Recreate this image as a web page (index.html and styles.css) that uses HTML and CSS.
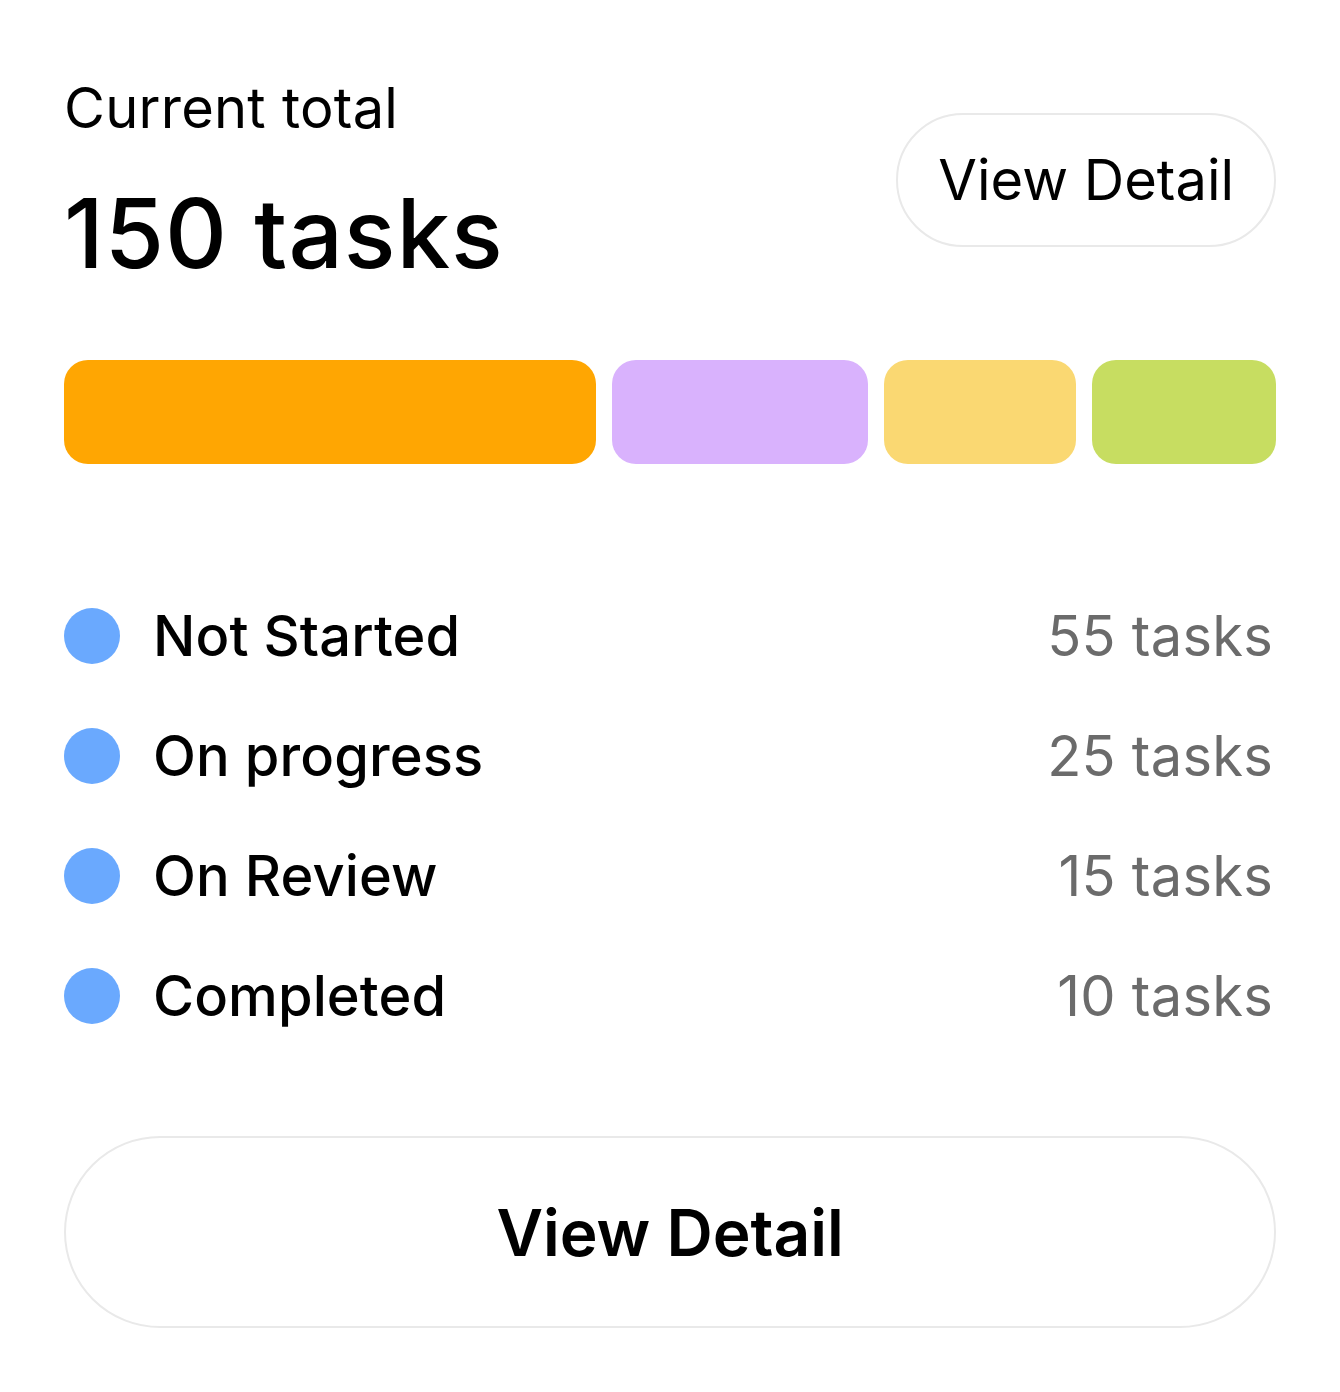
FILE: index.html
```html
<!DOCTYPE html>
<html lang="en">
<head>
    <meta charset="UTF-8">
    <meta name="viewport" content="width=device-width, initial-scale=1.0">
    <title>Task summary</title>
    <link rel="stylesheet" href="styles.css">
</head>
<body>

<div class="card">
    <div class="card-head">
        <div class="total">
            <p class="total-label">Current total</p>
            <p class="total-value">150 tasks</p>
        </div>
        <button class="btn-small" type="button">View Detail</button>
    </div>

    <div class="bar">
        <div class="seg seg-orange"></div>
        <div class="seg seg-purple"></div>
        <div class="seg seg-yellow"></div>
        <div class="seg seg-green"></div>
    </div>

    <ul class="status-list">
        <li class="status-row">
            <span class="dot"></span>
            <span class="status-name">Not Started</span>
            <span class="status-count">55 tasks</span>
        </li>
        <li class="status-row">
            <span class="dot"></span>
            <span class="status-name">On progress</span>
            <span class="status-count">25 tasks</span>
        </li>
        <li class="status-row">
            <span class="dot"></span>
            <span class="status-name">On Review</span>
            <span class="status-count">15 tasks</span>
        </li>
        <li class="status-row">
            <span class="dot"></span>
            <span class="status-name">Completed</span>
            <span class="status-count">10 tasks</span>
        </li>
    </ul>

    <button class="btn-wide" type="button">View Detail</button>
</div>

</body>
</html>
```

FILE: styles.css
```css
body {
    font-family: Inter, "Noto Sans", sans-serif;
    margin: 0;
    padding: 0;
    background: #fff;
    color: #000;
}
.card {
    padding: 75px 64px 64px;
}
.card-head {
    display: flex;
    justify-content: space-between;
    align-items: center;
}
.total-label {
    margin: 0;
    font-size: 56px;
    line-height: 67px;
    font-weight: 400;
    letter-spacing: 0.25px;
}
.total-value {
    margin: 34px 0 0;
    font-size: 96px;
    line-height: 115px;
    font-weight: 500;
    letter-spacing: 0.9px;
}
.btn-small {
    font-family: inherit;
    font-size: 56px;
    font-weight: 400;
    color: #000;
    background: #fff;
    height: 134px;
    padding: 0 40px;
    border: 2px solid #e9e9e9;
    border-radius: 67px;
    margin-top: -6px;
    margin-right: 0;
}
.bar {
    display: flex;
    gap: 16px;
    margin-top: 69px;
    height: 104px;
}
.seg {
    border-radius: 24px;
}
.seg-orange {
    flex: 0 0 532px;
    background-color: #ffa602;
}
.seg-purple {
    flex: 0 0 256px;
    background-color: #d9b2fd;
}
.seg-yellow {
    flex: 0 0 192px;
    background-color: #fad872;
}
.seg-green {
    flex: 1;
    background-color: #c7dd61;
}
.status-list {
    list-style: none;
    margin: 112px 0 0;
    padding: 0;
}
.status-row {
    display: flex;
    align-items: center;
    height: 120px;
}
.dot {
    width: 56px;
    height: 56px;
    border-radius: 50%;
    background-color: #6aa9fe;
    flex-shrink: 0;
}
.status-name {
    margin-left: 33px;
    font-size: 56px;
    font-weight: 500;
    letter-spacing: 0.1px;
    flex: 1;
}
.status-count {
    font-size: 56px;
    color: #6b6b6b;
    letter-spacing: 0.25px;
    margin-right: 3px;
}
.btn-wide {
    display: block;
    width: 100%;
    height: 192px;
    margin-top: 80px;
    font-family: inherit;
    font-size: 64px;
    font-weight: 600;
    color: #000;
    background: #fff;
    border: 2px solid #e9e9e9;
    border-radius: 96px;
}
```
